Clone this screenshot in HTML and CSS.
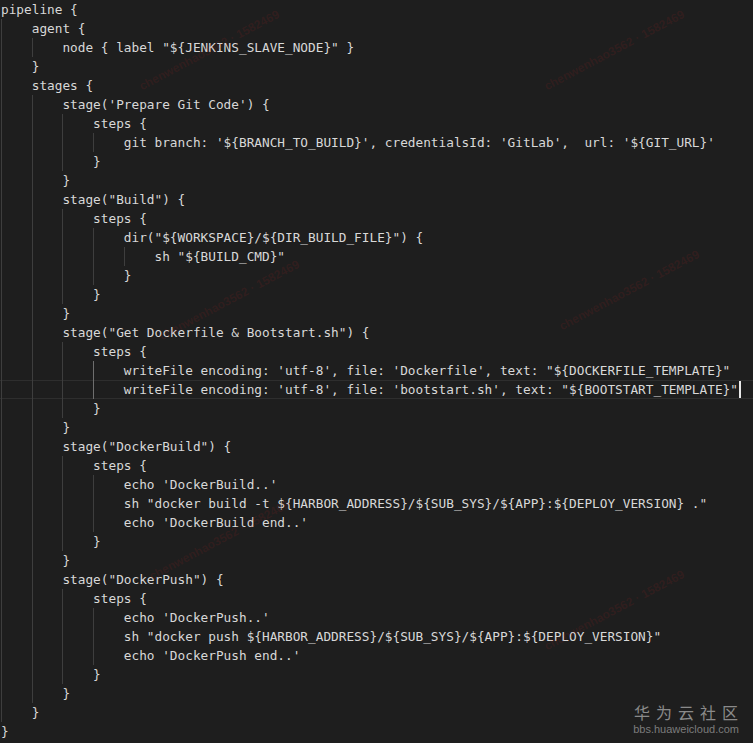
FILE: index.html
```html
<!DOCTYPE html>
<html>
<head>
<meta charset="utf-8">
<link rel="stylesheet" href="styles.css">
</head>
<body>
<div class="editor">
  <div class="ln"><span class="t">pipeline {</span></div>
  <div class="ln"><span class="g"></span><span class="t">agent {</span></div>
  <div class="ln"><span class="g"></span><span class="g"></span><span class="t">node { label "${JENKINS_SLAVE_NODE}" }</span></div>
  <div class="ln"><span class="g"></span><span class="t">}</span></div>
  <div class="ln"><span class="g"></span><span class="t">stages {</span></div>
  <div class="ln"><span class="g"></span><span class="g"></span><span class="t">stage('Prepare Git Code') {</span></div>
  <div class="ln"><span class="g"></span><span class="g"></span><span class="g"></span><span class="t">steps {</span></div>
  <div class="ln"><span class="g"></span><span class="g"></span><span class="g"></span><span class="g"></span><span class="t">git branch: '${BRANCH_TO_BUILD}', credentialsId: 'GitLab',  url: '${GIT_URL}'</span></div>
  <div class="ln"><span class="g"></span><span class="g"></span><span class="g"></span><span class="t">}</span></div>
  <div class="ln"><span class="g"></span><span class="g"></span><span class="t">}</span></div>
  <div class="ln"><span class="g"></span><span class="g"></span><span class="t">stage("Build") {</span></div>
  <div class="ln"><span class="g"></span><span class="g"></span><span class="g"></span><span class="t">steps {</span></div>
  <div class="ln"><span class="g"></span><span class="g"></span><span class="g"></span><span class="g"></span><span class="t">dir("${WORKSPACE}/${DIR_BUILD_FILE}") {</span></div>
  <div class="ln"><span class="g"></span><span class="g"></span><span class="g"></span><span class="g"></span><span class="g"></span><span class="t">sh "${BUILD_CMD}"</span></div>
  <div class="ln"><span class="g"></span><span class="g"></span><span class="g"></span><span class="g"></span><span class="t">}</span></div>
  <div class="ln"><span class="g"></span><span class="g"></span><span class="g"></span><span class="t">}</span></div>
  <div class="ln"><span class="g"></span><span class="g"></span><span class="t">}</span></div>
  <div class="ln"><span class="g"></span><span class="g"></span><span class="t">stage("Get Dockerfile &amp; Bootstart.sh") {</span></div>
  <div class="ln"><span class="g"></span><span class="g"></span><span class="g"></span><span class="t">steps {</span></div>
  <div class="ln"><span class="g"></span><span class="g"></span><span class="g"></span><span class="g a"></span><span class="t">writeFile encoding: 'utf-8', file: 'Dockerfile', text: "${DOCKERFILE_TEMPLATE}"</span></div>
  <div class="ln cur"><span class="g"></span><span class="g"></span><span class="g"></span><span class="g a"></span><span class="t">writeFile encoding: 'utf-8', file: 'bootstart.sh', text: "${BOOTSTART_TEMPLATE}"</span><span class="caret"></span></div>
  <div class="ln"><span class="g"></span><span class="g"></span><span class="g"></span><span class="t">}</span></div>
  <div class="ln"><span class="g"></span><span class="g"></span><span class="t">}</span></div>
  <div class="ln"><span class="g"></span><span class="g"></span><span class="t">stage("DockerBuild") {</span></div>
  <div class="ln"><span class="g"></span><span class="g"></span><span class="g"></span><span class="t">steps {</span></div>
  <div class="ln"><span class="g"></span><span class="g"></span><span class="g"></span><span class="g"></span><span class="t">echo 'DockerBuild..'</span></div>
  <div class="ln"><span class="g"></span><span class="g"></span><span class="g"></span><span class="g"></span><span class="t">sh "docker build -t ${HARBOR_ADDRESS}/${SUB_SYS}/${APP}:${DEPLOY_VERSION} ."</span></div>
  <div class="ln"><span class="g"></span><span class="g"></span><span class="g"></span><span class="g"></span><span class="t">echo 'DockerBuild end..'</span></div>
  <div class="ln"><span class="g"></span><span class="g"></span><span class="g"></span><span class="t">}</span></div>
  <div class="ln"><span class="g"></span><span class="g"></span><span class="t">}</span></div>
  <div class="ln"><span class="g"></span><span class="g"></span><span class="t">stage("DockerPush") {</span></div>
  <div class="ln"><span class="g"></span><span class="g"></span><span class="g"></span><span class="t">steps {</span></div>
  <div class="ln"><span class="g"></span><span class="g"></span><span class="g"></span><span class="g"></span><span class="t">echo 'DockerPush..'</span></div>
  <div class="ln"><span class="g"></span><span class="g"></span><span class="g"></span><span class="g"></span><span class="t">sh "docker push ${HARBOR_ADDRESS}/${SUB_SYS}/${APP}:${DEPLOY_VERSION}"</span></div>
  <div class="ln"><span class="g"></span><span class="g"></span><span class="g"></span><span class="g"></span><span class="t">echo 'DockerPush end..'</span></div>
  <div class="ln"><span class="g"></span><span class="g"></span><span class="g"></span><span class="t">}</span></div>
  <div class="ln"><span class="g"></span><span class="g"></span><span class="t">}</span></div>
  <div class="ln"><span class="g"></span><span class="t">}</span></div>
  <div class="ln"><span class="t">}</span></div>
</div>

<div class="wm wm1">chenwenhao3562 · 1582469</div>
<div class="wm wm2">chenwenhao3562 · 1582469</div>
<div class="wm wm3">chenwenhao3562 · 1582469</div>
<div class="wm wm4">chenwenhao3562 · 1582469</div>
<div class="wm wm5">chenwenhao3562 · 1582469</div>
<div class="wm wm6">chenwenhao3562 · 1582469</div>

<div class="logo">
  <div class="logo-cn">华为云社区</div>
  <div class="logo-en">bbs.huaweicloud.com</div>
</div>
</body>
</html>
```

FILE: styles.css
```css
html, body {
  margin: 0;
  padding: 0;
  background: #1e1e1e;
}

body {
  width: 753px;
  height: 743px;
  overflow: hidden;
  position: relative;
}

.editor {
  padding-left: 1px;
  font-family: "DejaVu Sans Mono", monospace;
  font-size: 12.75px;
  color: #d8d8d8;
}

.ln {
  display: flex;
  height: 19px;
  line-height: 19px;
  white-space: pre;
}

.ln.cur {
  box-shadow: inset 0 1px 0 #2e2e2e, inset 0 -1px 0 #2e2e2e;
  margin-left: -1px;
  padding-left: 1px;
}

.g {
  flex: none;
  width: 4ch;
  height: 19px;
  box-sizing: border-box;
  border-left: 1px solid #3e3e3e;
}

.g.a {
  border-left-color: #6e6e6e;
}

.t {
  flex: none;
}

.caret {
  flex: none;
  width: 2px;
  height: 17px;
  margin-top: 1px;
  margin-left: 1px;
  background: #e8e8e8;
}

.wm {
  position: absolute;
  font-family: "Liberation Sans", sans-serif;
  font-size: 12px;
  font-weight: bold;
  color: rgba(150, 30, 30, 0.16);
  white-space: nowrap;
  transform: rotate(-28deg);
  transform-origin: left center;
}

.wm1 { left: 140px; top: 80px; }
.wm2 { left: 545px; top: 80px; }
.wm3 { left: 160px; top: 330px; }
.wm4 { left: 560px; top: 320px; }
.wm5 { left: 150px; top: 570px; }
.wm6 { left: 545px; top: 640px; }

.logo {
  position: absolute;
  right: 14px;
  bottom: 8px;
  display: flex;
  flex-direction: column;
  align-items: center;
  gap: 3px;
  color: #8a8a8a;
  font-family: "Noto Sans CJK SC", "Liberation Sans", sans-serif;
}

.logo-cn {
  font-size: 16px;
  line-height: 16px;
  letter-spacing: 6px;
  margin-right: -6px;
}

.logo-en {
  font-family: "Liberation Sans", sans-serif;
  font-size: 11px;
  line-height: 12px;
  color: #7c7c7c;
}
```
